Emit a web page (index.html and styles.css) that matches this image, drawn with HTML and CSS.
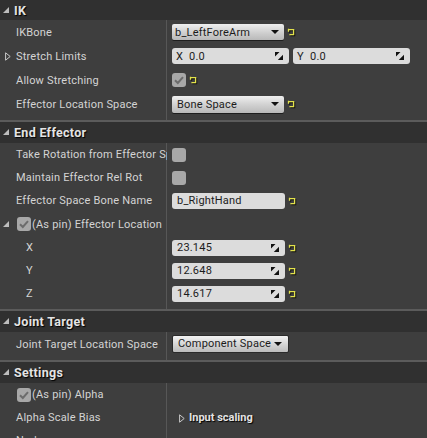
FILE: index.html
```html
<!DOCTYPE html>
<html>
<head>
<meta charset="utf-8">
<link rel="stylesheet" href="styles.css">
</head>
<body>
<div class="panel">

  <section class="cat first">
    <div class="cat-head"><span class="collapse"></span>IK</div>
    <div class="cat-body">
      <div class="row r24">
        <div class="name">IKBone</div>
        <div class="value">
          <div class="combo w112"><span>b_LeftForeArm</span><span class="arrow"></span></div>
          <svg class="reset" viewBox="0 0 8 8"><path d="M1.5 0.8 V3.8 M1.5 1.6 H6.6 V6.6 H2.4"/></svg>
        </div>
      </div>
      <div class="row r24">
        <div class="name"><svg class="expand" viewBox="0 0 6 9"><path d="M0.6 0.8 L5.2 4.5 L0.6 8.2 Z"/></svg>Stretch Limits</div>
        <div class="value gap4">
          <div class="num w117"><span class="axis">X</span><span class="grow">0.0</span><svg class="spin" viewBox="0 0 8 8"><path d="M0 0 H4.5 L0 4.5 Z M8 8 H2.8 L8 2.8 Z"/></svg></div>
          <div class="num w117"><span class="axis">Y</span><span class="grow">0.0</span><svg class="spin" viewBox="0 0 8 8"><path d="M0 0 H4.5 L0 4.5 Z M8 8 H2.8 L8 2.8 Z"/></svg></div>
        </div>
      </div>
      <div class="row r24">
        <div class="name">Allow Stretching</div>
        <div class="value">
          <span class="check on"><svg viewBox="0 0 14 14"><path d="M3 7.3 L5.8 10 L11 4.2"/></svg></span>
          <svg class="reset" viewBox="0 0 8 8"><path d="M1.5 0.8 V3.8 M1.5 1.6 H6.6 V6.6 H2.4"/></svg>
        </div>
      </div>
      <div class="row r24">
        <div class="name">Effector Location Space</div>
        <div class="value">
          <div class="combo w112 tall"><span>Bone Space</span><span class="arrow"></span></div>
          <svg class="reset" viewBox="0 0 8 8"><path d="M1.5 0.8 V3.8 M1.5 1.6 H6.6 V6.6 H2.4"/></svg>
        </div>
      </div>
    </div>
  </section>

  <section class="cat">
    <div class="cat-head"><span class="collapse"></span>End Effector</div>
    <div class="cat-body">
      <div class="row">
        <div class="name clip">Take Rotation from Effector Space</div>
        <div class="value"><span class="check"></span></div>
      </div>
      <div class="row">
        <div class="name">Maintain Effector Rel Rot</div>
        <div class="value"><span class="check"></span></div>
      </div>
      <div class="row">
        <div class="name">Effector Space Bone Name</div>
        <div class="value">
          <div class="text w113">b_RightHand</div>
          <svg class="reset" viewBox="0 0 8 8"><path d="M1.5 0.8 V3.8 M1.5 1.6 H6.6 V6.6 H2.4"/></svg>
        </div>
      </div>
      <div class="row r24">
        <div class="name pin"><span class="collapse small"></span><span class="check on"><svg viewBox="0 0 14 14"><path d="M3 7.3 L5.8 10 L11 4.2"/></svg></span>(As pin) Effector Location</div>
        <div class="value"></div>
      </div>
      <div class="row">
        <div class="name sub">X</div>
        <div class="value">
          <div class="num w113"><span class="grow">23.145</span><svg class="spin" viewBox="0 0 8 8"><path d="M0 0 H4.5 L0 4.5 Z M8 8 H2.8 L8 2.8 Z"/></svg></div>
          <svg class="reset" viewBox="0 0 8 8"><path d="M1.5 0.8 V3.8 M1.5 1.6 H6.6 V6.6 H2.4"/></svg>
        </div>
      </div>
      <div class="row">
        <div class="name sub">Y</div>
        <div class="value">
          <div class="num w113"><span class="grow">12.648</span><svg class="spin" viewBox="0 0 8 8"><path d="M0 0 H4.5 L0 4.5 Z M8 8 H2.8 L8 2.8 Z"/></svg></div>
          <svg class="reset" viewBox="0 0 8 8"><path d="M1.5 0.8 V3.8 M1.5 1.6 H6.6 V6.6 H2.4"/></svg>
        </div>
      </div>
      <div class="row">
        <div class="name sub">Z</div>
        <div class="value">
          <div class="num w113"><span class="grow">14.617</span><svg class="spin" viewBox="0 0 8 8"><path d="M0 0 H4.5 L0 4.5 Z M8 8 H2.8 L8 2.8 Z"/></svg></div>
          <svg class="reset" viewBox="0 0 8 8"><path d="M1.5 0.8 V3.8 M1.5 1.6 H6.6 V6.6 H2.4"/></svg>
        </div>
      </div>
    </div>
  </section>

  <section class="cat">
    <div class="cat-head"><span class="collapse"></span>Joint Target</div>
    <div class="cat-body">
      <div class="row r24">
        <div class="name">Joint Target Location Space</div>
        <div class="value">
          <div class="combo btn"><span>Component Space</span><span class="arrow"></span></div>
        </div>
      </div>
    </div>
  </section>

  <section class="cat">
    <div class="cat-head"><span class="collapse"></span>Settings</div>
    <div class="cat-body">
      <div class="row">
        <div class="name pin"><span class="check on"><svg viewBox="0 0 14 14"><path d="M3 7.3 L5.8 10 L11 4.2"/></svg></span>(As pin) Alpha</div>
        <div class="value"></div>
      </div>
      <div class="row">
        <div class="name">Alpha Scale Bias</div>
        <div class="value group"><svg class="expand" viewBox="0 0 6 9"><path d="M0.6 0.8 L5.2 4.5 L0.6 8.2 Z"/></svg><span class="bold">Input scaling</span></div>
      </div>
      <div class="row">
        <div class="name">Node</div>
        <div class="value"><span class="tick"></span></div>
      </div>
    </div>
  </section>

</div>
</body>
</html>
```

FILE: styles.css
```css
html, body {
  margin: 0;
  padding: 0;
  background: #3e3e3e;
}

.panel {
  width: 427px;
  height: 438px;
  overflow: hidden;
  font-family: Roboto, "Noto Sans", sans-serif;
  font-size: 11px;
  letter-spacing: 0.2px;
  color: #d4d4d4;
}

.cat-head {
  height: 21px;
  border-top: 2px solid #5b5b5b;
  background: #303030;
  display: flex;
  align-items: center;
  padding-left: 14px;
  position: relative;
  font-weight: bold;
  font-size: 12.5px;
  letter-spacing: 0.3px;
  color: #e4e4e4;
  text-shadow: 1px 1px 1px #000;
}

.first .cat-head {
  border-top: 0;
  height: 20px;
}

.collapse {
  position: absolute;
  left: 3px;
  top: 7px;
  width: 0;
  height: 0;
  border-left: 6px solid transparent;
  border-bottom: 6px solid #bdbdbd;
}

.cat-body {
  padding-bottom: 4px;
  background:
    linear-gradient(to right, transparent 166px, #575757 166px, #575757 167px, transparent 167px),
    #3e3e3e;
}

.row {
  display: grid;
  grid-template-columns: 167px 1fr;
  height: 23px;
}

.row.r24 {
  height: 24px;
}

.name {
  display: flex;
  align-items: center;
  padding-left: 16px;
  position: relative;
  white-space: nowrap;
  overflow: hidden;
}

.name.sub {
  padding-left: 26px;
}

.name.pin {
  padding-left: 17px;
}

.name.pin .check {
  margin-right: 1px;
}

.name .collapse.small {
  left: 3px;
  top: 9px;
}

.value {
  display: flex;
  align-items: center;
  padding-left: 5px;
  white-space: nowrap;
}

.value.gap4 {
  gap: 4px;
}

.expand {
  position: absolute;
  left: 5px;
  top: 8px;
  width: 6px;
  height: 9px;
}

.expand path {
  fill: none;
  stroke: #c8c8c8;
  stroke-width: 1;
}

.value.group {
  position: relative;
  padding-left: 22px;
}

.value.group .expand {
  left: 12px;
  top: 8px;
}

.bold {
  font-weight: bold;
  letter-spacing: 0;
  color: #e4e4e4;
  text-shadow: 1px 1px 1px #000;
}

.combo {
  height: 16px;
  box-sizing: border-box;
  display: flex;
  align-items: center;
  justify-content: space-between;
  padding: 0 5px 0 3px;
  border-radius: 2px;
  background: linear-gradient(#efefef, #cfcfcf 55%, #b9b9b9);
  box-shadow: 0 1px 0 #1e1e1e;
  color: #1c1c1c;
  white-space: nowrap;
}

.combo.tall {
  height: 17px;
  padding-left: 5px;
}

.w112 { width: 112px; }
.w113 { width: 113px; }
.w117 { width: 117px; }

.combo.btn {
  height: 18px;
  padding: 0 6px 0 5px;
  justify-content: flex-start;
  gap: 3px;
  margin-top: -1px;
  border: 1px solid #2a2a2a;
  background: linear-gradient(#f2f2f2, #d6d6d6 50%, #bcbcbc);
  box-shadow: none;
}

.arrow {
  width: 0;
  height: 0;
  border-left: 4px solid transparent;
  border-right: 4px solid transparent;
  border-top: 4px solid #111;
}

.reset {
  width: 8px;
  height: 8px;
  margin-left: 3px;
  overflow: visible;
}

.reset path {
  fill: none;
  stroke: #e2e24c;
  stroke-width: 1.3;
  filter: drop-shadow(1px 1px 0 #111);
}

.num, .text {
  height: 16px;
  box-sizing: border-box;
  display: flex;
  align-items: center;
  background: #dcdcdc;
  border-radius: 3px;
  color: #1c1c1c;
  padding: 0 6px 0 5px;
}

.axis {
  width: 13px;
}

.num .axis {
  margin-left: -1px;
}

.grow {
  flex: 1;
}

.spin {
  width: 8px;
  height: 8px;
}

.spin path {
  fill: #111;
}

.check {
  width: 14px;
  height: 14px;
  border-radius: 3px;
  background: #a8a8a8;
  display: inline-flex;
  flex: none;
}

.check svg {
  width: 14px;
  height: 14px;
}

.check svg path {
  fill: none;
  stroke: #6c6c6c;
  stroke-width: 2;
}

.tick {
  width: 1px;
  height: 4px;
  margin-top: 14px;
  margin-left: 4px;
  background: #e8e8a0;
}
```
